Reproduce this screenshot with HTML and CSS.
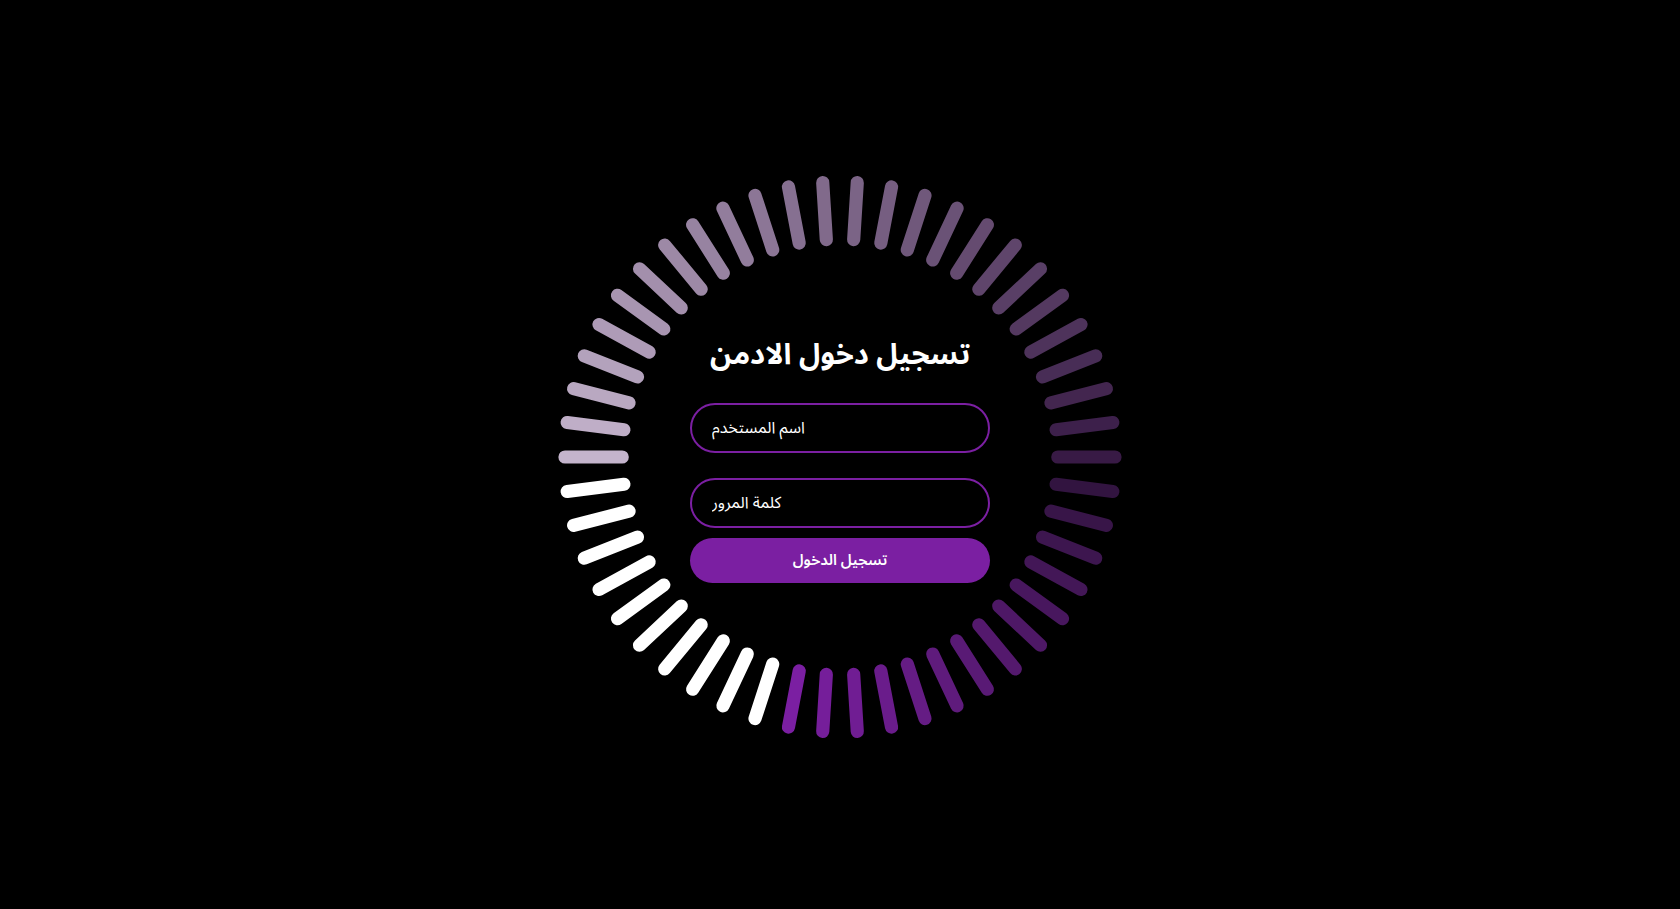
FILE: index.html
```html
<!DOCTYPE html>
<html lang="ar">
<head>
<meta charset="utf-8">
<title>تسجيل دخول الادمن</title>
<link rel="stylesheet" href="styles.css">
</head>
<body>
<main class="page">
  <div class="stage">
    <div class="ring">
      <span style="--i:0;--c:#c4b4cc"></span>
      <span style="--i:1;--c:#bfaec7"></span>
      <span style="--i:2;--c:#b9a8c1"></span>
      <span style="--i:3;--c:#b3a2bc"></span>
      <span style="--i:4;--c:#ae9bb7"></span>
      <span style="--i:5;--c:#a895b1"></span>
      <span style="--i:6;--c:#a38fac"></span>
      <span style="--i:7;--c:#9d89a6"></span>
      <span style="--i:8;--c:#9783a1"></span>
      <span style="--i:9;--c:#927d9c"></span>
      <span style="--i:10;--c:#8c7696"></span>
      <span style="--i:11;--c:#867091"></span>
      <span style="--i:12;--c:#816a8b"></span>
      <span style="--i:13;--c:#7b6486"></span>
      <span style="--i:14;--c:#765e81"></span>
      <span style="--i:15;--c:#70587b"></span>
      <span style="--i:16;--c:#6a5276"></span>
      <span style="--i:17;--c:#654b70"></span>
      <span style="--i:18;--c:#5f456b"></span>
      <span style="--i:19;--c:#593f66"></span>
      <span style="--i:20;--c:#543960"></span>
      <span style="--i:21;--c:#4e335b"></span>
      <span style="--i:22;--c:#482d56"></span>
      <span style="--i:23;--c:#43264f"></span>
      <span style="--i:24;--c:#3d204b"></span>
      <span style="--i:25;--c:#381a45"></span>
      <span style="--i:26;--c:#321440"></span>
      <span style="--i:27;--c:#381548"></span>
      <span style="--i:28;--c:#3d164f"></span>
      <span style="--i:29;--c:#431757"></span>
      <span style="--i:30;--c:#48175e"></span>
      <span style="--i:31;--c:#4e1866"></span>
      <span style="--i:32;--c:#54196d"></span>
      <span style="--i:33;--c:#591a75"></span>
      <span style="--i:34;--c:#5f1b7c"></span>
      <span style="--i:35;--c:#651c84"></span>
      <span style="--i:36;--c:#6a1c8b"></span>
      <span style="--i:37;--c:#701d93"></span>
      <span style="--i:38;--c:#751e9a"></span>
      <span style="--i:39;--c:#7b1fa2"></span>
      <span style="--i:40;--c:#ffffff"></span>
      <span style="--i:41;--c:#ffffff"></span>
      <span style="--i:42;--c:#ffffff"></span>
      <span style="--i:43;--c:#ffffff"></span>
      <span style="--i:44;--c:#ffffff"></span>
      <span style="--i:45;--c:#ffffff"></span>
      <span style="--i:46;--c:#ffffff"></span>
      <span style="--i:47;--c:#ffffff"></span>
      <span style="--i:48;--c:#ffffff"></span>
      <span style="--i:49;--c:#ffffff"></span>
    </div>
    <div class="login-box">
      <form class="login-form">
        <h2 class="title">تسجيل دخول الادمن</h2>
        <input class="field" type="text" placeholder="اسم المستخدم">
        <input class="field" type="password" placeholder="كلمة المرور">
        <button class="btn" type="submit">تسجيل الدخول</button>
      </form>
    </div>
  </div>
</main>
</body>
</html>
```

FILE: styles.css
```css
* {
  box-sizing: border-box;
  margin: 0;
  padding: 0;
}

html,
body {
  height: 100%;
}

body {
  background: #000;
  color: #fff;
  font-family: "Noto Sans Arabic", "DejaVu Sans", sans-serif;
}

.page {
  min-height: 100vh;
  padding-top: 4px;
  display: flex;
  justify-content: center;
  align-items: center;
}

.stage {
  display: grid;
  place-items: center;
}

.ring {
  grid-area: 1 / 1;
  position: relative;
  width: 256px;
  height: 256px;
}

.ring span {
  position: absolute;
  left: 0;
  top: 125px;
  width: 32px;
  height: 6px;
  border-radius: 8px;
  background: var(--c);
  transform-origin: 128px 3px;
  transform: scale(2.2) rotate(calc(var(--i) * 7.2deg));
}

.login-box {
  grid-area: 1 / 1;
  width: 300px;
  margin-top: 4px;
}

.login-form {
  display: flex;
  flex-direction: column;
}

.title {
  font-size: 29px;
  line-height: 40px;
  font-weight: 700;
  text-align: center;
  margin-bottom: 28px;
}

.field {
  width: 100%;
  height: 50px;
  background: transparent;
  border: 2px solid #7b1fa2;
  border-radius: 40px;
  padding: 0 20px;
  font-family: inherit;
  font-size: 16px;
  color: #fff;
  outline: none;
}

.field::placeholder {
  color: #fff;
  opacity: 1;
}

.field + .field {
  margin-top: 25px;
}

.btn {
  margin-top: 10px;
  height: 45px;
  border: none;
  border-radius: 40px;
  background: #7b1fa2;
  color: #fff;
  font-family: inherit;
  font-size: 15px;
  font-weight: 600;
}
```
